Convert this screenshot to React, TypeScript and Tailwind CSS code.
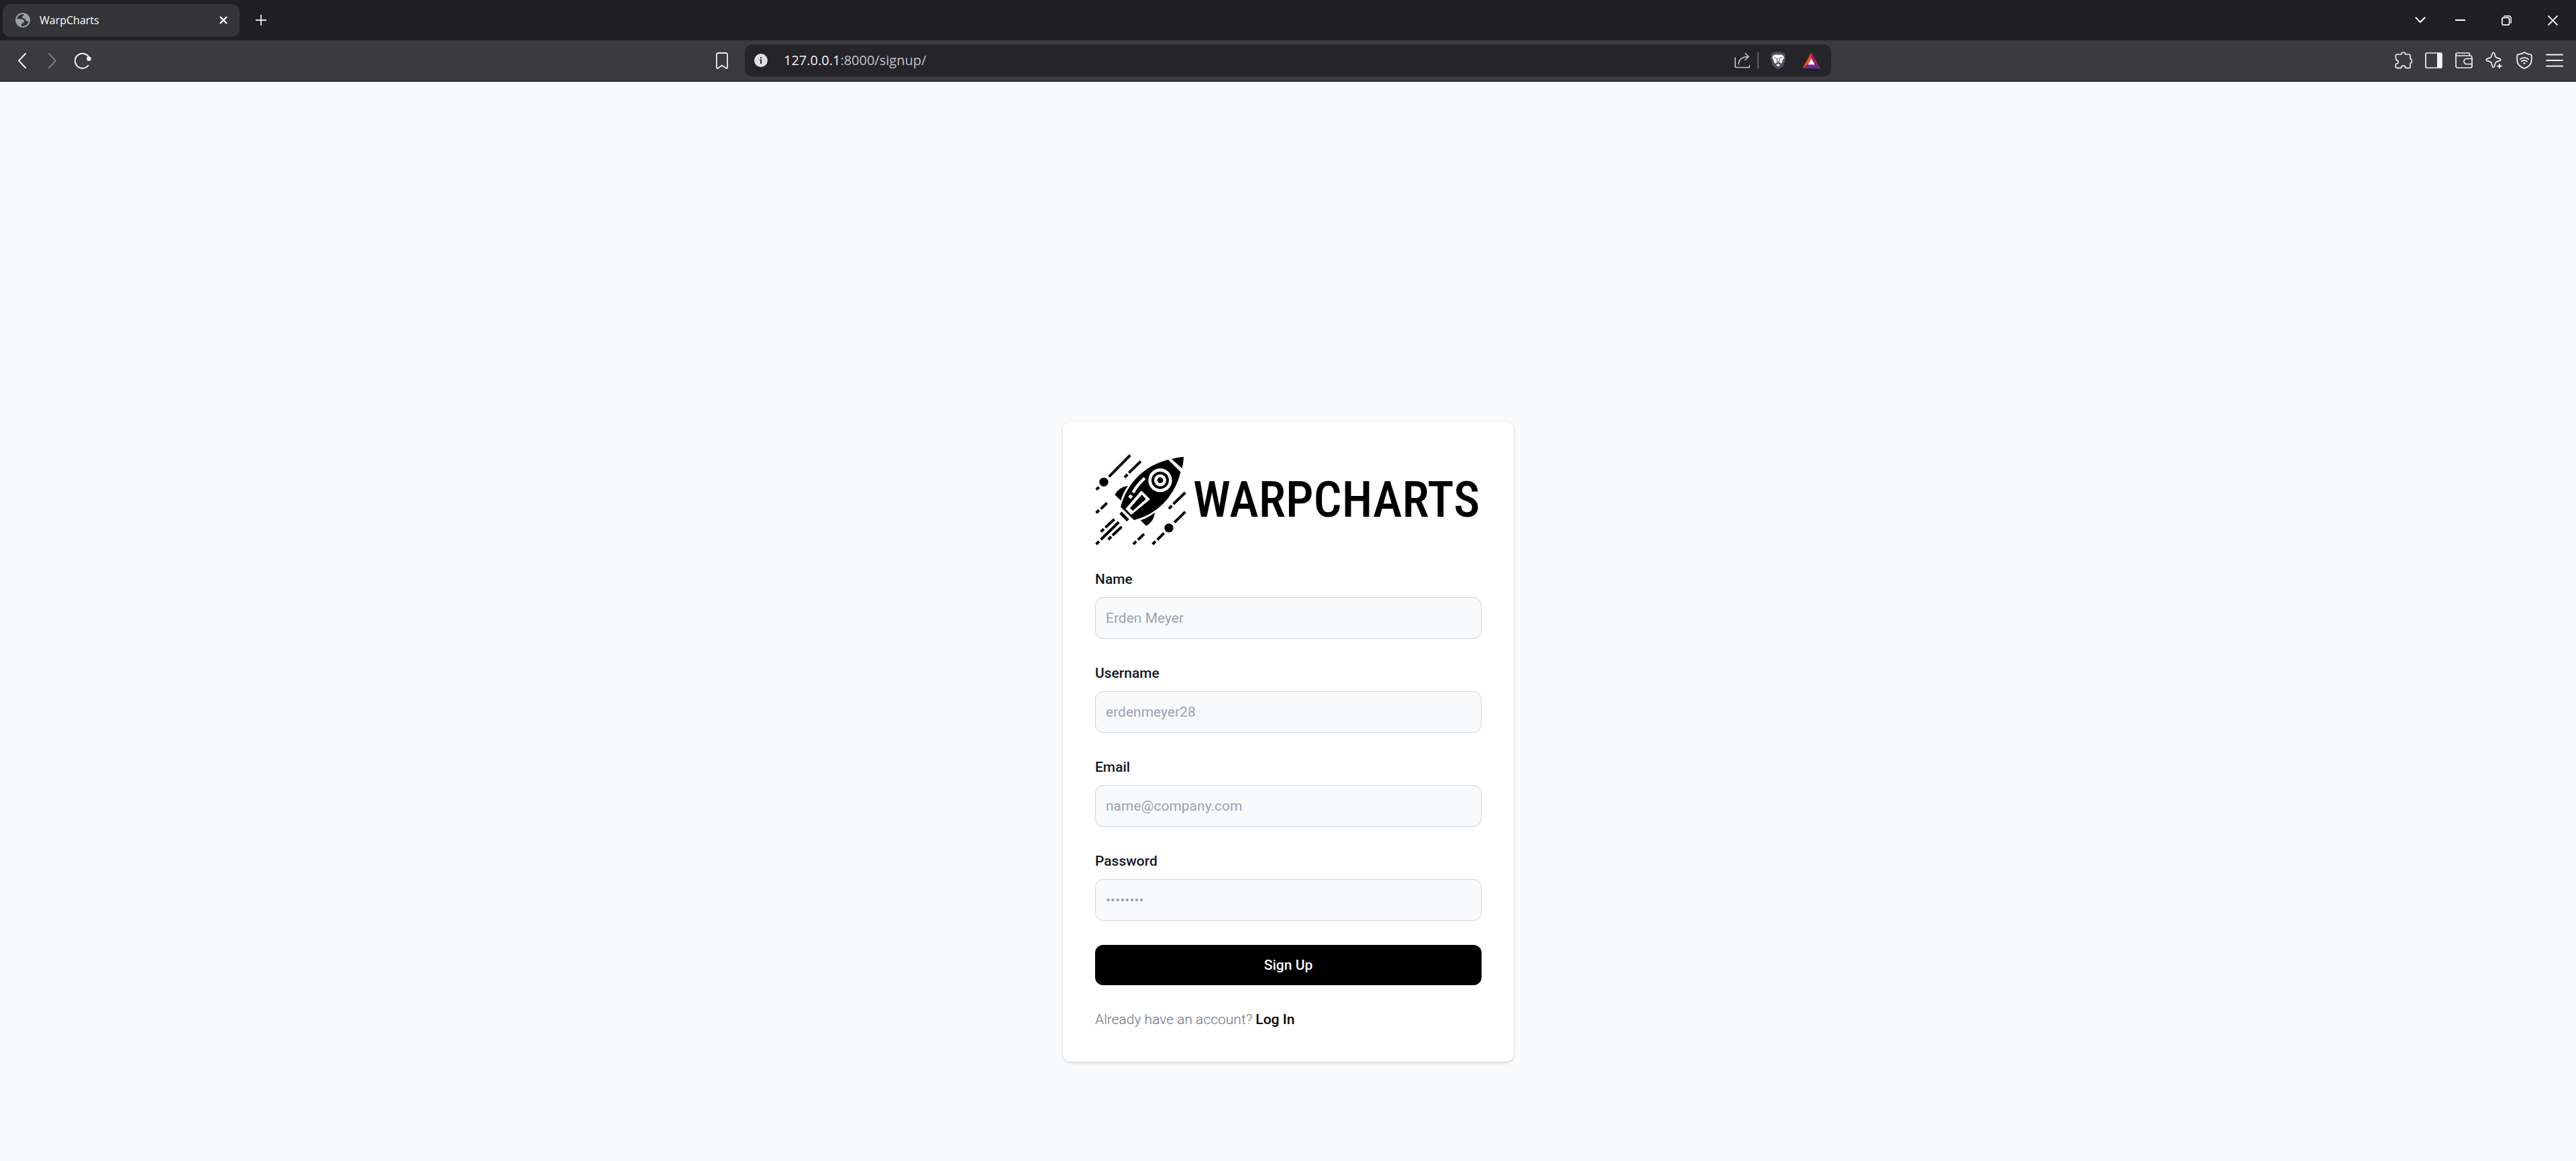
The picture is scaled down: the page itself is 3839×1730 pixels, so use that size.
import type { ReactNode } from "react";

function Icon({ box, size, children }: { box: string; size: string; children: ReactNode }) {
  return (
    <svg
      viewBox={box}
      className={`shrink-0 ${size}`}
      fill="none"
      stroke="currentColor"
      strokeLinecap="round"
      strokeLinejoin="round"
      aria-hidden="true"
    >
      {children}
    </svg>
  );
}

function ToolButton({ label, dim, children }: { label: string; dim?: boolean; children: ReactNode }) {
  return (
    <button
      type="button"
      aria-label={label}
      className={`flex h-[45px] w-[45px] items-center justify-center ${dim ? "text-[#7d7c82]" : "text-[#f1f1f5]"}`}
    >
      {children}
    </button>
  );
}

function WindowButton({ label, children }: { label: string; children: ReactNode }) {
  return (
    <button type="button" aria-label={label} className="flex h-[60px] w-[69px] items-center justify-center text-white">
      {children}
    </button>
  );
}

function TabStrip() {
  return (
    <div className="flex h-[60px] items-center bg-[#201f24] pl-1">
      <div className="flex h-[49px] w-[353px] items-center rounded-[12px] bg-[#353438] pr-[15px] pl-[19px] text-white">
        <Icon box="0 0 22 22" size="h-[22px] w-[22px]">
          <circle cx="11" cy="11" r="10" stroke="#9aa0a6" strokeWidth="2" />
          <path
            d="M1 9L7.500 9.300C11 9.600 13.500 10.800 13 13.300 12.700 15.300 10.800 15.300 9.500 16.200 8.600 17 8.800 18.500 8.600 20.600 4 19.800 1 16 1 11Z"
            fill="#9aa0a6"
            stroke="none"
          />
          <path
            d="M12.500 1.200C17.500 1.800 21 6 21 11 20.500 13 17.500 13.300 16 12.200 14.800 11.300 15.300 10 14.300 9.200 13 8.200 10.500 8.500 10 7 9.600 5.500 11.800 5 12.300 3.800Z"
            fill="#9aa0a6"
            stroke="none"
          />
        </Icon>
        <span className="ml-[14px] flex-1 font-['Open_Sans','Noto_Sans',sans-serif] text-[16px] leading-6">WarpCharts</span>
        <button type="button" aria-label="Close tab" className="flex h-[18px] w-[18px] items-center justify-center">
          <Icon box="0 0 12 12" size="h-[12px] w-[12px]">
            <path d="M1 1l10 10M11 1L1 11" strokeWidth="2.4" strokeLinecap="butt" />
          </Icon>
        </button>
      </div>
      <button type="button" aria-label="New tab" className="ml-[15px] flex h-[34px] w-[34px] items-center justify-center text-[#e9e9ed]">
        <Icon box="0 0 16 16" size="h-4 w-4">
          <path d="M8 0v16M0 8h16" strokeWidth="1.8" strokeLinecap="butt" />
        </Icon>
      </button>
      <div className="ml-auto flex items-center">
        <button type="button" aria-label="Search tabs" className="flex h-[60px] w-[51px] items-center justify-center text-white">
          <Icon box="0 0 16 10" size="h-[10px] w-4">
            <path d="M1.5 1.5L8 8l6.500-6.500" strokeWidth="2.2" />
          </Icon>
        </button>
        <WindowButton label="Minimize">
          <Icon box="0 0 15 2" size="h-[2px] w-[15px]">
            <path d="M0 1h15" strokeWidth="2" strokeLinecap="butt" />
          </Icon>
        </WindowButton>
        <WindowButton label="Restore">
          <Icon box="0 0 15 15" size="h-[15px] w-[15px]">
            <rect x="0.900" y="3.400" width="10.700" height="10.700" rx="2" strokeWidth="1.700" />
            <path d="M3.800 1.200C4.400 .8 5 .8 5.500 .8h5.200A3.500 3.500 0 0 1 14.200 4.300v5.200c0 .8-.1 1.200-.5 1.700" strokeWidth="1.500" />
          </Icon>
        </WindowButton>
        <WindowButton label="Close">
          <Icon box="0 0 15 15" size="h-[15px] w-[15px]">
            <path d="M.5.5l14 14M14.500.5l-14 14" strokeWidth="1.800" strokeLinecap="butt" />
          </Icon>
        </WindowButton>
      </div>
    </div>
  );
}

function AddressBar() {
  return (
    <div className="flex h-12 items-center rounded-[12px] bg-[#252429] pr-4 pl-[14px]">
      <button type="button" aria-label="View site information" className="shrink-0">
        <svg viewBox="0 0 20 20" className="h-5 w-5" aria-hidden="true">
          <circle cx="10" cy="10" r="10" fill="#dfdee4" />
          <path d="M9 5h2.200v2.200H9zM8.200 8.600H11.200V15H9V10.400H8.200z" fill="#35343a" />
        </svg>
      </button>
      <div className="relative ml-6 flex-1 font-['Open_Sans','Noto_Sans',sans-serif] text-[20px] leading-[30px]">
        <div aria-hidden="true" className="text-[#c3c2c8]">
          <span className="text-[#f3f3f6]">127.0.0.1</span>:8000/signup/
        </div>
        <input
          type="text"
          aria-label="Address"
          defaultValue="127.0.0.1:8000/signup/"
          className="absolute inset-0 w-full bg-transparent text-transparent outline-none"
        />
      </div>
      <button type="button" aria-label="Share" className="flex h-[30px] w-[30px] items-center justify-center text-[#c0bfc5]">
        <Icon box="0 0 23 24" size="h-[24px] w-[23px]">
          <path d="M1 8v12.500a2 2 0 0 0 2 2h17.500a2 2 0 0 0 2-2V19.500" strokeWidth="1.700" />
          <path d="M6 17.500C6.500 10 11 6.600 20.500 6.300M16 1.500l5 4.800-5 4.900" strokeWidth="1.700" />
        </Icon>
      </button>
      <div className="ml-2 h-6 w-[2px] bg-[#605f66]" />
      <button type="button" aria-label="Brave Shields" className="ml-4 flex h-[30px] w-[26px] items-center justify-center">
        <svg viewBox="0 0 24 27" className="h-[27px] w-6" aria-hidden="true">
          <path d="M7 1.200L8.200 0h7.600L17 1.200h3.200L23 4.500l-.6 2 1 3-3.200 11.200L12 27l-8.200-6.300L.600 9.500l1-3-.6-2L3.800 1.200Z" fill="#4d4d61" />
          <path
            d="M12 4.800L8.500 4.300 5 5.300 3 9l2.500 4L6 16.500l2.500 1.300 1.500-.8 2-.3 2 .3 1.500.8L18 16.500l.5-3.500L21 9l-2-3.700-3.500-1ZM12 18l3 1.800-3 2.500-3-2.500Z"
            fill="#fff"
          />
          <path
            d="M5.500 8.800l4.500.7M18.500 8.800l-4.500.7M10.600 10L10 14l2 1.200 2-1.200-.6-4M8.500 17.200l3.500-1.500 3.500 1.500"
            fill="none"
            stroke="#4d4d61"
            strokeWidth="1.100"
          />
        </svg>
      </button>
      <button type="button" aria-label="Brave Rewards" className="ml-[22px] flex h-[30px] w-7 items-center justify-center">
        <svg viewBox="0 0 27 24" className="h-6 w-[27px]" aria-hidden="true">
          <path d="M13.500 0v9L8.500 18 0 24Z" fill="#ff4724" />
          <path d="M13.500 0L27 24l-8.500-6-5-9Z" fill="#9e1f63" />
          <path d="M0 24l8.500-6h10L27 24Z" fill="#662d91" />
          <path d="M13.500 9l5 9.200h-10Z" fill="#fff" />
        </svg>
      </button>
    </div>
  );
}

function Toolbar() {
  return (
    <div className="grid h-[62px] grid-cols-[1fr_minmax(0,1619px)_1fr] border-b border-[#3b3a3f] bg-[#3b3a3f] text-[#f1f1f5]">
      <div className="flex items-center justify-between border-b border-[#2f2e33] pr-3 pl-[10px]">
        <div className="flex">
          <ToolButton label="Back">
            <Icon box="0 0 12 23" size="h-[23px] w-3">
              <path d="M11 1L1 11.500 11 22" strokeWidth="2" />
            </Icon>
          </ToolButton>
          <ToolButton label="Forward" dim>
            <Icon box="0 0 12 23" size="h-[23px] w-3">
              <path d="M1 1l10 10.500L1 22" strokeWidth="2" />
            </Icon>
          </ToolButton>
          <ToolButton label="Reload">
            <Icon box="0 0 26 26" size="h-[26px] w-[26px]">
              <path d="M21.500 20.500A11 11 0 1 1 22.500 8.500" strokeWidth="2" />
              <circle cx="22.500" cy="10.500" r="3.300" fill="currentColor" stroke="none" />
            </Icon>
          </ToolButton>
        </div>
        <ToolButton label="Bookmark this page">
          <Icon box="0 0 18 25" size="h-[25px] w-[18px]">
            <path d="M1 3.500A2.500 2.500 0 0 1 3.500 1h11A2.500 2.500 0 0 1 17 3.500v19.300c0 1-1 1.400-1.700.9L9 19.500l-6.300 4.200c-.7.5-1.700.1-1.700-.9Z" strokeWidth="1.800" />
          </Icon>
        </ToolButton>
      </div>
      <div className="flex flex-col justify-center border-b border-[#2f2e33]">
        <AddressBar />
      </div>
      <div className="flex items-center justify-end border-b border-[#2f2e33] pr-[10px]">
        <ToolButton label="Extensions">
          <Icon box="0 0 78 78" size="h-[26px] w-[26px]">
            <path
              d="M10 12h18c2-12 18-12 20 0h16c3 0 5 2 5 5v15c10 3 10 17 0 20v15c0 4-2 6-6 6H48c-1-14-18-14-20 0H12c-5 0-8-3-8-7V55c15-1 15-16 2-18C5 30 4 25 4 18c0-4 2-6 6-6Z"
              strokeWidth="5"
            />
          </Icon>
        </ToolButton>
        <ToolButton label="Sidebar">
          <Icon box="0 0 26 24" size="h-6 w-[26px]">
            <rect x="1" y="1" width="24" height="22" rx="2" strokeWidth="1.700" />
            <path d="M18 1h5.500A1.500 1.500 0 0 1 25 2.500v19a1.500 1.500 0 0 1-1.500 1.500H18Z" fill="currentColor" stroke="none" />
          </Icon>
        </ToolButton>
        <ToolButton label="Wallet">
          <Icon box="0 0 26 24" size="h-6 w-[26px]">
            <path d="M1 4V20.500A2.500 2.500 0 0 0 3.500 23h19a2.500 2.500 0 0 0 2.500-2.500V7.500A2.500 2.500 0 0 0 22.500 5H3a2 2 0 0 1 0-4h16.500a2 2 0 0 1 2 2v2" strokeWidth="1.700" />
            <path d="M25 9.500h-8a4 4 0 0 0 0 8h8" strokeWidth="1.700" />
          </Icon>
        </ToolButton>
        <ToolButton label="Leo AI">
          <Icon box="0 0 26 26" size="h-[26px] w-[26px]">
            <path
              d="M10.500 2.500c.6-1.700 2.200-1.700 2.800 0l1.800 5c.3.800.7 1.200 1.400 1.400l5 1.700c1.600.6 1.600 2.200 0 2.800l-5 1.700c-.7.300-1.100.7-1.400 1.400l-1.800 5.500c-.6 1.700-2.200 1.700-2.800 0l-1.800-5.500c-.3-.7-.7-1.100-1.400-1.400l-5-1.700c-1.600-.6-1.600-2.200 0-2.800l5-1.700c.7-.2 1.100-.6 1.400-1.400Z"
              strokeWidth="1.700"
            />
            <path d="M21 17l1.300 3.200 3.700 1.300-3.700 1.300L21 26l-1.300-3.200L16 21.500l3.700-1.300Z" fill="currentColor" stroke="none" />
          </Icon>
        </ToolButton>
        <ToolButton label="VPN">
          <Icon box="0 0 24 26" size="h-[26px] w-6">
            <path d="M12 1C9 3 5.500 4 2.500 4.300c-.8.100-1.300.6-1.300 1.400V12c0 6.500 5 11 10.800 13 5.800-2 10.800-6.500 10.800-13V5.700c0-.8-.5-1.300-1.300-1.400C18.500 4 15 3 12 1Z" strokeWidth="1.800" />
            <path d="M5.800 11.200a9.500 9.500 0 0 1 12.400 0M8 14.500a6 6 0 0 1 8 0" strokeWidth="1.800" />
            <path d="M10 16.900a3.600 3.600 0 0 1 4 0L12 19Z" fill="currentColor" stroke="none" />
          </Icon>
        </ToolButton>
        <ToolButton label="Menu">
          <Icon box="0 0 26 20" size="h-5 w-[26px]">
            <path d="M1 1.500h24M1 10h24M1 18.500h24" strokeWidth="1.800" />
          </Icon>
        </ToolButton>
      </div>
    </div>
  );
}

function RocketMark() {
  return (
    <svg viewBox="36 21 408 405" className="h-[135px] w-[136px] shrink-0" fill="none" aria-hidden="true">
      <g stroke="#000" strokeWidth="12">
        <path d="M193 25L98 121M240 52L187 104M181 111L168 124M54 168L41 178" />
        <path d="M89 238L62 265M54 271L41 283" />
        <path d="M439 192L386 243M379 251L366 264M439 278L391 325" />
        <path d="M344 373L314 403M306 410L293 423M255 377L228 403M220 410L207 423" />
        <path d="M122 311L82 348M75 355L62 367M142 324L62 402M54 410L41 423M155 345L114 383M108 389L95 402" />
        <path d="M150 282L183 316" strokeWidth="14" />
      </g>
      <circle cx="75" cy="145" r="20" fill="#000" />
      <circle cx="366" cy="350" r="20" fill="#000" />
      <path d="M378 42Q404 34 429 32Q433 32 432 37Q431 60 425 84Z" fill="#000" />
      <path d="M363 45L418 100C398 190 330 285 210 315L150 256C180 145 260 70 363 45Z" fill="#000" />
      <path d="M183 162Q143 166 124 202L151 227Q162 190 183 162Z" fill="#000" />
      <path d="M303 281Q300 320 265 341L239 316Q274 304 303 281Z" fill="#000" />
      <circle cx="327" cy="137" r="53" fill="#fff" />
      <circle cx="327" cy="137" r="33" stroke="#000" strokeWidth="12" />
      <circle cx="327" cy="137" r="13" fill="#000" />
      <path d="M206 192Q222 160 258 127" stroke="#fff" strokeWidth="13" />
      <path d="M190 216L199 204" stroke="#fff" strokeWidth="15" />
      <path d="M243 183L282 222L198 291L172 265Z" fill="#fff" />
      <path d="M245 201L263 221L205 273L192 262Z" fill="#000" />
    </svg>
  );
}

type FieldProps = { id: string; label: string; type: string; placeholder: string };

function Field({ id, label, type, placeholder }: FieldProps) {
  return (
    <div>
      <label htmlFor={id} className="mb-3 block text-[21px] leading-[30px] font-medium text-[#111827]">
        {label}
      </label>
      <input
        id={id}
        name={id}
        type={type}
        placeholder={placeholder}
        className="block w-full rounded-[12px] border border-[#d1d5db] bg-[#f9fafb] px-[15px] py-[15px] text-[21px] leading-[30px] text-[#111827] placeholder:text-[#9ca3af]"
      />
    </div>
  );
}

const fields: FieldProps[] = [
  { id: "name", label: "Name", type: "text", placeholder: "Erden Meyer" },
  { id: "username", label: "Username", type: "text", placeholder: "erdenmeyer28" },
  { id: "email", label: "Email", type: "email", placeholder: "name@company.com" },
  { id: "password", label: "Password", type: "password", placeholder: "••••••••" },
];

export default function App() {
  return (
    <div className="flex min-h-screen flex-col bg-[#f9fafb] font-['Roboto',sans-serif]">
      <header>
        <TabStrip />
        <Toolbar />
      </header>
      <main className="flex flex-1 flex-col items-center justify-center pt-[359px] pr-6 pl-[25px]">
        <section className="w-full max-w-[672px] rounded-[12px] bg-white p-12 shadow-[0_2px_5px_rgba(0,0,0,0.1),0_1px_3px_rgba(0,0,0,0.08)]">
          <h1 className="mb-9 flex items-center">
            <RocketMark />
            <span className="ml-[10px] font-['Roboto_Condensed','Roboto',sans-serif] text-[74px] leading-[84px] font-medium whitespace-nowrap text-black">
              WARPCHARTS
            </span>
          </h1>
          <form className="space-y-9" onSubmit={(e) => e.preventDefault()}>
            {fields.map((f) => (
              <Field key={f.id} {...f} />
            ))}
            <button
              type="submit"
              className="block w-full rounded-[12px] bg-black py-[15px] text-center text-[21px] leading-[30px] font-medium text-white"
            >
              Sign Up
            </button>
            <p className="text-[21px] leading-[30px] font-light text-[#6b7280]">
              Already have an account?{" "}
              <a href="#login" className="font-medium text-black">
                Log In
              </a>
            </p>
          </form>
        </section>
      </main>
    </div>
  );
}
